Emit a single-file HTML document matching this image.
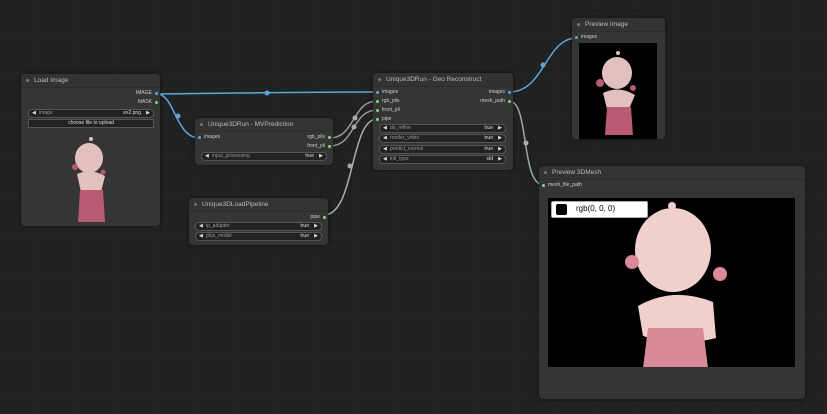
<!DOCTYPE html><html><head><style>
body{margin:0;width:827px;height:414px;overflow:hidden;background:#222;font-family:"Liberation Sans",sans-serif;position:relative;
background-image:linear-gradient(#1e1e1e 1px,transparent 1px),linear-gradient(90deg,#1e1e1e 1px,transparent 1px);background-size:10px 10px}
.n{position:absolute;background:#353535;border-radius:4px;box-shadow:0 0 3px #0008}
.t{height:13px;background:#333;border-radius:4px 4px 0 0;color:#bbb;font-size:6.5px;line-height:13px;padding-left:13px;position:relative;border-bottom:1px solid #2c2c2c}
.t:before{content:"";position:absolute;left:5px;top:5px;width:3px;height:3px;border-radius:50%;background:#777}
.l{position:absolute;font-size:5px;color:#ccc}
.d{position:absolute;width:3px;height:3px;border-radius:50%}
.w{position:absolute;height:7px;background:#222;border:1px solid #555;border-radius:4px;font-size:5px;color:#999;line-height:7px}
.w .a{position:absolute;left:3px;color:#ddd}.w .b{position:absolute;right:3px;color:#ddd}
.w .k{position:absolute;left:10px}.w .v{position:absolute;right:12px;color:#ddd}
</style></head><body>
<svg width="827" height="414" style="position:absolute;left:0;top:0">
<g fill="none" stroke-width="1.5">
<path d="M157 94 C250 93 300 92 377 92" stroke="#5aa7e0"/>
<path d="M157 94 C175 94 175 138 200 138" stroke="#5aa7e0"/>
<path d="M509 92 C545 92 545 38 577 38" stroke="#5aa7e0"/>
<path d="M509 101 C530 101 520 185 544 185" stroke="#9aa89a"/>
<path d="M330 138 C355 138 352 101 377 101" stroke="#999"/>
<path d="M330 146 C355 146 352 110 377 110" stroke="#999"/>
<path d="M324 215 C355 215 350 119 377 119" stroke="#aab0a4"/>
</g>
<g fill="#5aa7e0"><circle cx="267" cy="93" r="2.5"/><circle cx="178" cy="116" r="2.5"/><circle cx="543" cy="65" r="2.5"/></g>
<g fill="#aaa"><circle cx="526" cy="143" r="2.5"/><circle cx="355" cy="118" r="2.5"/><circle cx="354" cy="127" r="2.5"/><circle cx="350" cy="166" r="2.5"/></g>
</svg>

<div class="n" style="left:21px;top:74px;width:139px;height:152px"><div class="t">Load Image</div>
<div class="l" style="right:8px;top:16px">IMAGE</div><div class="d" style="right:2px;top:18px;background:#5aa7e0"></div>
<div class="l" style="right:8px;top:25px">MASK</div><div class="d" style="right:2px;top:27px;background:#7d7"></div>
<div class="w" style="left:7px;top:35px;width:124px"><span class="a">◀</span><span class="k">image</span><span class="v">ex2.png</span><span class="b">▶</span></div>
<div class="w" style="left:7px;top:45px;width:124px;border-radius:0;text-align:center;color:#ddd">choose file to upload</div>
<svg style="position:absolute;left:40px;top:60px" width="60" height="92"><g fill="#e3c0c0"><circle cx="30" cy="5" r="2"/><ellipse cx="28" cy="24" rx="14" ry="15"/><path d="M16 40 Q30 34 44 42 L40 58 L20 58Z"/></g><g fill="#b85a70"><path d="M19 56 L42 56 L44 88 L17 88Z"/><circle cx="14" cy="33" r="3"/><circle cx="42" cy="38" r="2.5"/></g></svg>
</div>

<div class="n" style="left:195px;top:118px;width:138px;height:47px"><div class="t">Unique3DRun - MVPrediction</div>
<div class="d" style="left:3px;top:18px;background:#5aa7e0"></div><div class="l" style="left:9px;top:16px">images</div>
<div class="l" style="right:8px;top:16px">rgb_pils</div><div class="d" style="right:2px;top:18px;background:#7d7"></div>
<div class="l" style="right:8px;top:25px">front_pil</div><div class="d" style="right:2px;top:27px;background:#7d7"></div>
<div class="w" style="left:6px;top:34px;width:124px"><span class="a">◀</span><span class="k">input_processing</span><span class="v">true</span><span class="b">▶</span></div></div>

<div class="n" style="left:189px;top:198px;width:139px;height:47px"><div class="t">Unique3DLoadPipeline</div>
<div class="l" style="right:8px;top:16px">pipe</div><div class="d" style="right:2px;top:18px;background:#7d7"></div>
<div class="w" style="left:6px;top:24px;width:125px"><span class="a">◀</span><span class="k">ip_adapter</span><span class="v">true</span><span class="b">▶</span></div>
<div class="w" style="left:6px;top:34px;width:125px"><span class="a">◀</span><span class="k">plus_model</span><span class="v">true</span><span class="b">▶</span></div></div>

<div class="n" style="left:373px;top:73px;width:140px;height:97px"><div class="t">Unique3DRun - Geo Reconstruct</div>
<div class="d" style="left:3px;top:18px;background:#5aa7e0"></div><div class="l" style="left:9px;top:16px">images</div>
<div class="d" style="left:3px;top:27px;background:#7d7"></div><div class="l" style="left:9px;top:25px">rgb_pils</div>
<div class="d" style="left:3px;top:36px;background:#7d7"></div><div class="l" style="left:9px;top:34px">front_pil</div>
<div class="d" style="left:3px;top:45px;background:#7d7"></div><div class="l" style="left:9px;top:43px">pipe</div>
<div class="l" style="right:8px;top:16px">images</div><div class="d" style="right:2px;top:18px;background:#5aa7e0"></div>
<div class="l" style="right:8px;top:25px">mesh_path</div><div class="d" style="right:2px;top:27px;background:#7d7"></div>
<div class="w" style="left:6px;top:51px;width:125px"><span class="a">◀</span><span class="k">do_refine</span><span class="v">true</span><span class="b">▶</span></div>
<div class="w" style="left:6px;top:61px;width:125px"><span class="a">◀</span><span class="k">render_video</span><span class="v">true</span><span class="b">▶</span></div>
<div class="w" style="left:6px;top:72px;width:125px"><span class="a">◀</span><span class="k">predict_normal</span><span class="v">true</span><span class="b">▶</span></div>
<div class="w" style="left:6px;top:82px;width:125px"><span class="a">◀</span><span class="k">init_type</span><span class="v">std</span><span class="b">▶</span></div></div>

<div class="n" style="left:572px;top:18px;width:93px;height:121px"><div class="t">Preview Image</div>
<div class="d" style="left:3px;top:18px;background:#5aa7e0"></div><div class="l" style="left:9px;top:16px">images</div>
<div style="position:absolute;left:7px;top:25px;width:78px;height:96px;background:#000">
<svg width="78" height="96"><g fill="#e3c0c0"><circle cx="39" cy="10" r="2"/><ellipse cx="38" cy="30" rx="15" ry="16"/><path d="M24 50 Q40 42 56 52 L50 66 L28 66Z"/></g><g fill="#b85a70"><path d="M28 64 L52 64 L54 92 L26 92Z"/><circle cx="21" cy="40" r="4"/><circle cx="54" cy="45" r="3"/></g></svg></div></div>

<div class="n" style="left:539px;top:166px;width:266px;height:233px"><div class="t">Preview 3DMesh</div>
<div class="d" style="left:3px;top:18px;background:#7d7"></div><div class="l" style="left:9px;top:16px">mesh_file_path</div>
<div style="position:absolute;left:9px;top:32px;width:247px;height:169px;background:#000;overflow:hidden">
<svg width="247" height="169" style="position:absolute;left:0;top:0"><g fill="#efd0cc"><circle cx="124" cy="8" r="4"/><ellipse cx="125" cy="52" rx="38" ry="42"/><path d="M90 108 Q125 88 165 104 L168 140 Q130 150 95 138Z"/></g><g fill="#d98a98"><path d="M100 130 L155 130 L160 170 L95 170Z"/><circle cx="84" cy="64" r="7"/><circle cx="172" cy="76" r="7"/></g></svg>
<div style="position:absolute;left:3px;top:3px;width:95px;height:15px;background:#fff;border-radius:2px;border:1px solid #aaa">
<div style="position:absolute;left:4px;top:2px;width:11px;height:11px;background:#000;border-radius:2px"></div>
<span style="position:absolute;left:24px;top:2px;font-size:8px;color:#000">rgb(0, 0, 0)</span></div></div></div>
</body></html>
